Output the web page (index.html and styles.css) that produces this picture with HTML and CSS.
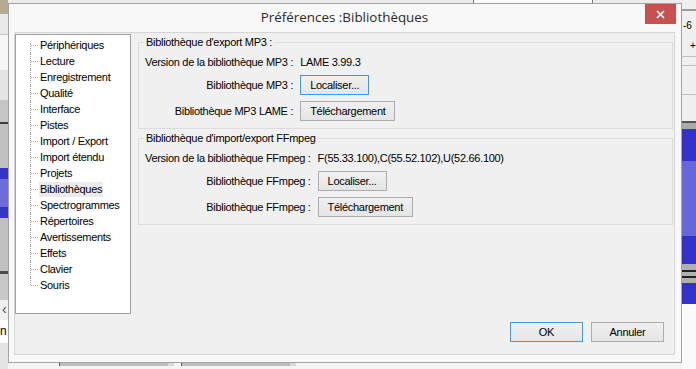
FILE: index.html
```html
<!DOCTYPE html>
<html lang="fr">
<head>
    <meta charset="UTF-8">
    <title>Préférences :Bibliothèques</title>
    <link rel="stylesheet" href="styles.css">
</head>
<body>
    <!-- application window behind the dialog -->
    <div class="app">
        <div class="app-left">
            <div class="l-title"></div>
            <div class="l-bar"></div>
            <div class="l-box"></div>
            <div class="l-tool"></div>
            <div class="l-ruler"></div>
            <div class="l-track"></div>
            <div class="l-wave"></div>
            <div class="l-track2"></div>
            <div class="l-gap"></div>
            <div class="l-arrow">‹</div>
            <div class="l-text">n</div>
            <div class="l-foot"></div>
        </div>
        <div class="app-mid">
            <div class="app-top"><span class="top-box"></span></div>
            <div class="app-bottom">
                <span class="scroll scroll-a"></span>
                <span class="scroll scroll-b"></span>
            </div>
        </div>
        <div class="app-right">
            <div class="r-top"></div>
            <div class="r-meter"><span class="r-db">-6</span><span class="r-plus">+</span></div>
            <div class="r-slot"></div>
            <div class="r-slot2"></div>
            <div class="r-space"></div>
            <div class="r-ruler"></div>
            <div class="r-wave"></div>
            <div class="r-white"></div>
        </div>
    </div>

    <div class="dialog">
        <div class="titlebar">
            <span class="title">Préférences :Bibliothèques</span>
            <span class="close">
                <svg width="9" height="9" viewBox="0 0 9 9"><path d="M1 1 L8 8 M8 1 L1 8" stroke="#fff" stroke-width="1.7"/></svg>
            </span>
        </div>

        <div class="client">
            <div class="body-row">
                <div class="tree">
                    <ul>
                        <li><span>Périphériques</span></li>
                        <li><span>Lecture</span></li>
                        <li><span>Enregistrement</span></li>
                        <li><span>Qualité</span></li>
                        <li><span>Interface</span></li>
                        <li><span>Pistes</span></li>
                        <li><span>Import / Export</span></li>
                        <li><span>Import étendu</span></li>
                        <li><span>Projets</span></li>
                        <li class="sel"><span>Bibliothèques</span></li>
                        <li><span>Spectrogrammes</span></li>
                        <li><span>Répertoires</span></li>
                        <li><span>Avertissements</span></li>
                        <li><span>Effets</span></li>
                        <li><span>Clavier</span></li>
                        <li><span>Souris</span></li>
                    </ul>
                </div>

                <div class="panel">
                    <fieldset class="group">
                        <legend>Bibliothèque d'export MP3 :</legend>
                        <div class="rows">
                            <span class="version-label">Version de la bibliothèque MP3 :</span>
                            <span>LAME 3.99.3</span>
                            <span class="label">Bibliothèque MP3 :</span>
                            <span><button class="btn focus">Localiser...</button></span>
                            <span class="label">Bibliothèque MP3 LAME :</span>
                            <span><button class="btn">Téléchargement</button></span>
                        </div>
                    </fieldset>

                    <fieldset class="group group-2">
                        <legend>Bibliothèque d'import/export FFmpeg</legend>
                        <div class="rows">
                            <span class="version-label">Version de la bibliothèque FFmpeg :</span>
                            <span>F(55.33.100),C(55.52.102),U(52.66.100)</span>
                            <span class="label">Bibliothèque FFmpeg :</span>
                            <span><button class="btn">Localiser...</button></span>
                            <span class="label">Bibliothèque FFmpeg :</span>
                            <span><button class="btn">Téléchargement</button></span>
                        </div>
                    </fieldset>
                </div>
            </div>

            <div class="footer-row">
                <button class="btn wide focus">OK</button>
                <button class="btn wide">Annuler</button>
            </div>
        </div>
    </div>
</body>
</html>
```

FILE: styles.css
```css
body {
    margin: 0;
    width: 696px;
    height: 369px;
    overflow: hidden;
    position: relative;
    font-family: 'Liberation Sans', Arial, sans-serif;
    font-size: 11px;
    background: #f0f0f0;
}


/* background application */
.app {
    display: flex;
    height: 369px;
}

.app-left {
    width: 8px;
    display: flex;
    flex-direction: column;
    overflow: hidden;
}

.l-title { height: 14px; background: #b3aa8f; }
.l-bar { height: 20px; background: #e9e9e9; border-bottom: 1px solid #c6c6c6; }
.l-box { height: 35px; background: #f6f6f6; }
.l-tool { height: 30px; background: #e4e4e4; }
.l-ruler { height: 22px; background: #c6c6c6; border-bottom: 2px solid #3c3c3c; }
.l-track { height: 44px; background: #c0c0c0; }
.l-wave { height: 50px; background: linear-gradient(#3434c8 0 22%, #6c6cdc 22% 78%, #3434c8 78%); }
.l-track2 { height: 53px; background: #c0c0c0; border-bottom: 3px solid #4a4a4a; }
.l-gap { height: 26px; background: #c8c8c8; }

.l-arrow {
    height: 20px;
    background: #f0f0f0;
    font-size: 14px;
    line-height: 18px;
    padding-left: 2px;
    color: #444;
}

.l-text {
    height: 23px;
    background: #fff;
    font-size: 12px;
    line-height: 23px;
}

.l-foot { flex: 1; background: #e4e4e4; }

.app-mid {
    flex: 1;
    display: flex;
    flex-direction: column;
    justify-content: space-between;
}

.app-top {
    height: 3px;
    background: #ececec;
    display: flex;
}

.top-box {
    margin-left: 465px;
    width: 118px;
    background: #fff;
    border-left: 1px solid #777;
    border-right: 1px solid #777;
}

.app-bottom {
    height: 6px;
    background: #f4f4f4;
    display: flex;
    align-items: flex-start;
}

.scroll {
    height: 3px;
    background: #bdbdbd;
    border-left: 1px solid #555;
    border-right: 6px solid #d8d8d8;
}

.scroll-a { margin-left: 51px; width: 108px; }
.scroll-b { margin-left: 7px; width: 108px; }

.app-right {
    width: 14px;
    display: flex;
    flex-direction: column;
    overflow: hidden;
}

.r-top { height: 9px; background: #f0f0f0; border-bottom: 2px solid #9c9c9c; }

.r-meter {
    height: 45px;
    background: #f0f0f0;
    border-bottom: 1px solid #c0c0c0;
    position: relative;
    font-size: 10px;
    line-height: 10px;
    white-space: nowrap;
}

.r-db { position: absolute; left: 1px; top: 10px; }
.r-plus { position: absolute; left: 8px; top: 30px; }

.r-slot { height: 8px; background: #f0f0f0; border-bottom: 1px solid #c0c0c0; }
.r-slot2 { height: 28px; background: #f0f0f0; border-bottom: 1px solid #c0c0c0; }
.r-space { height: 26px; background: #f0f0f0; }
.r-ruler { height: 6px; background: #aaaaaa; border-top: 2px solid #555; }

.r-wave {
    height: 175px;
    background: linear-gradient(#3232c8 0 32px, #6666dd 32px 107px, #3232c8 107px 135px,
        #b0b0b0 135px 141px, #222 141px 143px, #b0b0b0 143px 147px, #222 147px 149px,
        #b0b0b0 149px 154px, #3232c8 154px);
}

.r-white { flex: 1; background: #fafafa; }


/* dialog */
.dialog {
    position: absolute;
    left: 8px;
    top: 3px;
    width: 674px;
    height: 360px;
    box-sizing: border-box;
    border: 1px solid #a3a3a3;
    background: #f8f8f8;
    padding: 0 6px 7px 5px;
    display: flex;
    flex-direction: column;
    letter-spacing: -0.3px;
}

.titlebar {
    height: 28px;
    display: flex;
    align-items: center;
    justify-content: center;
    position: relative;
}

.title {
    font-family: 'Open Sans', sans-serif;
    font-size: 13.4px;
    letter-spacing: 0;
    color: #2b2b2b;
    margin-top: -2px;
}

.close {
    position: absolute;
    right: -1px;
    top: 0;
    width: 31px;
    height: 20px;
    background: #c75050;
    display: flex;
    align-items: center;
    justify-content: center;
}

.client {
    flex: 1;
    border: 1px solid #d6d6d6;
    background: #f0f0f0;
    display: flex;
    flex-direction: column;
}

.body-row {
    display: flex;
    gap: 7px;
    padding-top: 1px;
}


/* tree */
.tree {
    width: 116px;
    height: 280px;
    box-sizing: border-box;
    border: 1px solid #a0a0a0;
    background: #fff;
    padding-top: 2px;
}

.tree ul {
    list-style: none;
    margin: 0;
    padding: 0 0 0 14px;
}

.tree li {
    position: relative;
    height: 16px;
    line-height: 16px;
    padding-left: 9px;
    white-space: nowrap;
}

.tree li::before {
    content: '';
    position: absolute;
    left: 0;
    top: 0;
    bottom: 0;
    border-left: 1px dotted #a0a0a0;
}

.tree li:first-child::before { top: 6px; }
.tree li:last-child::before { bottom: 8px; }

.tree li::after {
    content: '';
    position: absolute;
    left: 1px;
    top: 8px;
    width: 7px;
    border-top: 1px dotted #a0a0a0;
}

.tree span {
    padding: 0 1px;
    display: inline-block;
    line-height: 15px;
}

.tree .sel span {
    background: #ebebeb;
}


/* right panel */
.panel {
    flex: 1;
    margin-right: 1px;
}

.group {
    border: 1px solid #dcdcdc;
    margin: 2px 0 0 0;
    padding: 6px 6px 7px 6px;
    min-width: 0;
}

.group-2 {
    margin-top: 3px;
}

.group legend {
    padding: 0 2px;
    margin-left: -1px;
    line-height: 13px;
}

.rows {
    display: grid;
    grid-template-columns: auto auto;
    justify-content: start;
    align-items: center;
    column-gap: 7px;
    row-gap: 6px;
    line-height: 14px;
}

.version-label {
    justify-self: start;
}

.label {
    justify-self: end;
}

.btn {
    height: 20px;
    box-sizing: border-box;
    border: 1px solid #acacac;
    background: linear-gradient(#f0f0f0, #e5e5e5);
    font-family: inherit;
    font-size: 11px;
    letter-spacing: -0.3px;
    color: #000;
    padding: 0 9px;
    margin: 0;
    vertical-align: top;
}

.btn.focus {
    border-color: #4796e0;
}

.btn.wide {
    width: 73px;
}

.footer-row {
    display: flex;
    justify-content: flex-end;
    gap: 8px;
    padding: 8px 10px 0 0;
}
```
